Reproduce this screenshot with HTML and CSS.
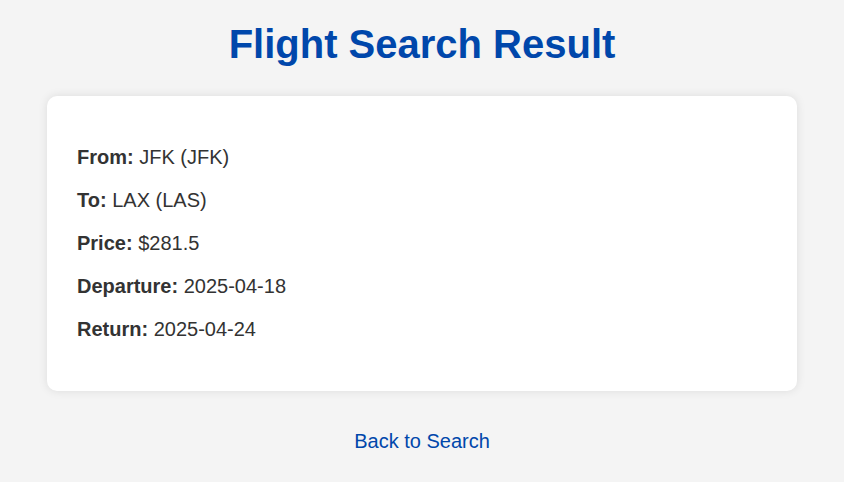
FILE: index.html
```html
<!DOCTYPE html>
<html lang="en">
<head>
<meta charset="utf-8">
<title>Flight Search Result</title>
<link rel="stylesheet" href="styles.css">
</head>
<body>
<h1 class="title">Flight Search Result</h1>
<div class="card">
  <p class="row"><strong>From:</strong> JFK (JFK)</p>
  <p class="row"><strong>To:</strong> LAX (LAS)</p>
  <p class="row"><strong>Price:</strong> $281.5</p>
  <p class="row"><strong>Departure:</strong> 2025-04-18</p>
  <p class="row"><strong>Return:</strong> 2025-04-24</p>
</div>
<div class="back"><a class="back-link" href="#">Back to Search</a></div>
</body>
</html>
```
FILE: styles.css
```css
html, body {
  margin: 0;
  padding: 0;
}
body {
  background: #f4f4f4;
  font-family: "Liberation Sans", Arial, sans-serif;
  color: #333;
  padding: 16px 20px 0;
}
.title {
  margin: 0 0 24px;
  text-align: center;
  color: #0047ab;
  font-size: 40px;
  line-height: 56px;
  font-weight: bold;
}
.card {
  max-width: 690px;
  margin: 0 auto;
  background: #fff;
  border-radius: 10px;
  box-shadow: 0 0 10px rgba(0,0,0,0.1);
  padding: 30px;
}
.row {
  font-size: 20px;
  line-height: 23px;
  margin: 20px 0;
}
.back {
  text-align: center;
  margin-top: 39px;
  font-size: 20px;
  line-height: 23px;
}
.back-link {
  color: #0047ab;
  text-decoration: none;
}
```
